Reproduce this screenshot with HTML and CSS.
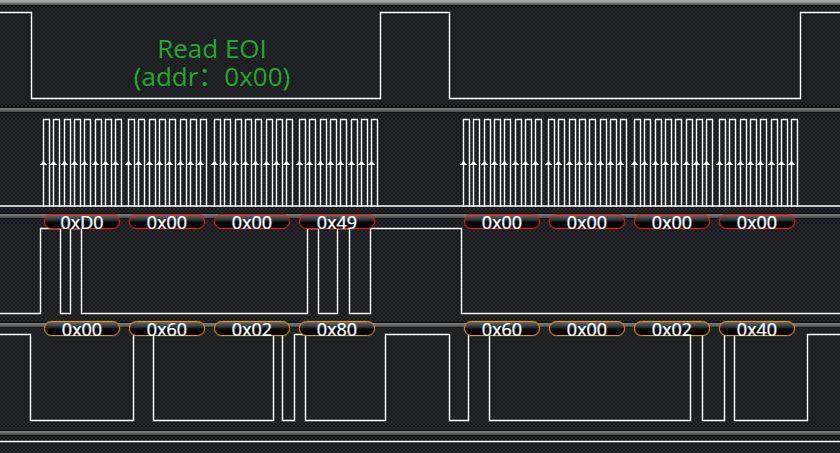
FILE: index.html
```html
<!DOCTYPE html>
<html lang="zh">
<head>
<meta charset="utf-8">
<title>Logic analyzer</title>
<link rel="stylesheet" href="styles.css">
</head>
<body>
<div class="scope">
  <div class="sep sep-top"></div>

  <div class="ch ch1">
    <svg class="wave" width="840" height="101" viewBox="0 6 840 101">
      <path d="M0 12.5H31.5V98.5H380.5V12.5H449.5V98.5H800.5V12.5H840"/>
    </svg>
    <div class="note">Read EOI<br>(addr：0x00)</div>
  </div>

  <div class="sep"></div>

  <div class="ch ch2">
    <svg class="wave" width="840" height="100" viewBox="0 113 840 100">
      <defs>
        <g id="clkbyte">
          <path class="clk" d="M0.5 206V119.5h6V206M10.5 206V119.5h6V206M21.5 206V119.5h6V206M31.5 206V119.5h6V206M41.5 206V119.5h6V206M52.5 206V119.5h6V206M62.5 206V119.5h6V206M72.5 206V119.5h6V206"/>
          <path class="arrows" d="M-3 164h7v1h-7zM-2 164l2.5-3.5 2.5 3.5zM7 164h7v1h-7zM8 164l2.5-3.5 2.5 3.5zM18 164h7v1h-7zM19 164l2.5-3.5 2.5 3.5zM28 164h7v1h-7zM29 164l2.5-3.5 2.5 3.5zM38 164h7v1h-7zM39 164l2.5-3.5 2.5 3.5zM49 164h7v1h-7zM50 164l2.5-3.5 2.5 3.5zM59 164h7v1h-7zM60 164l2.5-3.5 2.5 3.5zM69 164h7v1h-7zM70 164l2.5-3.5 2.5 3.5z"/>
        </g>
      </defs>
      <path d="M0 206H840"/>
      <use href="#clkbyte" x="43"/>
      <use href="#clkbyte" x="128"/>
      <use href="#clkbyte" x="214"/>
      <use href="#clkbyte" x="299"/>
      <use href="#clkbyte" x="463"/>
      <use href="#clkbyte" x="548"/>
      <use href="#clkbyte" x="634"/>
      <use href="#clkbyte" x="719"/>
    </svg>
  </div>

  <div class="sep bus bus-red">
    <div class="group group-a">
      <div class="badge">0xD0</div>
      <div class="badge">0x00</div>
      <div class="badge">0x00</div>
      <div class="badge">0x49</div>
    </div>
    <div class="group group-b">
      <div class="badge">0x00</div>
      <div class="badge">0x00</div>
      <div class="badge">0x00</div>
      <div class="badge">0x00</div>
    </div>
  </div>

  <div class="ch ch3">
    <svg class="wave" width="840" height="103" viewBox="0 219 840 103">
      <path d="M0 313.5H40.5V228.5H60.5V313.5H70.5V228.5H81.5V313.5H307.5V228.5H318.5V313.5H337.5V228.5H349.5V313.5H370.5V228.5H461.5V313.5H840"/>
    </svg>
  </div>

  <div class="sep bus bus-orange">
    <div class="group group-a">
      <div class="badge">0x00</div>
      <div class="badge">0x60</div>
      <div class="badge">0x02</div>
      <div class="badge">0x80</div>
    </div>
    <div class="group group-b">
      <div class="badge">0x60</div>
      <div class="badge">0x00</div>
      <div class="badge">0x02</div>
      <div class="badge">0x40</div>
    </div>
  </div>

  <div class="ch ch4">
    <svg class="wave" width="840" height="102" viewBox="0 328 840 102">
      <path d="M0 334.5H30.5V420.5H133.5V334.5H153.5V420.5H273.5V334.5H282.5V420.5H294.5V334.5H305.5V420.5H385.5V334.5H449.5V420.5H468.5V334.5H489.5V420.5H690.5V334.5H702.5V420.5H724.5V334.5H734.5V420.5H807.5V334.5H840"/>
    </svg>
  </div>

  <div class="sep"></div>

  <div class="ch ch5">
    <svg class="wave" width="840" height="17" viewBox="0 436 840 17">
      <path d="M0 441.5H840"/>
    </svg>
  </div>
</div>
</body>
</html>
```

FILE: styles.css
```css
html, body {
  margin: 0;
  padding: 0;
  background: #232529;
}

body {
  width: 840px;
  height: 453px;
  overflow: hidden;
  font-family: "Open Sans", "Noto Sans CJK SC", sans-serif;
}

.scope {
  display: flex;
  flex-direction: column;
  width: 840px;
  height: 453px;
}

.sep {
  flex: 0 0 6px;
  height: 6px;
  display: flex;
  align-items: flex-start;
  background: linear-gradient(to bottom,
    #0d0e10 0, #0d0e10 1px,
    #818181 1px, #676767 3px, #4b4b4b 5px,
    #141517 5px, #141517 6px);
}

.sep-top {
  background: linear-gradient(to bottom,
    #8e8e8e 0, #b6b6b6 1px, #7c7c7c 3px, #4e4e4e 5px,
    #121315 5px, #121315 6px);
}

.ch {
  flex: 0 0 auto;
  background-color: #282a2e;
  background-image:
    radial-gradient(circle, #16171a 0.8px, transparent 1.2px),
    radial-gradient(circle, #16171a 0.8px, transparent 1.2px);
  background-size: 4px 4px, 4px 4px;
  background-position: 0 0, 2px 2px;
}

.ch1 {
  height: 101px;
  position: relative;
}
.ch2 { height: 100px; }
.ch3 { height: 103px; }
.ch4 { height: 102px; }
.ch5 { height: 17px; }

.wave {
  display: block;
}

.wave path {
  fill: none;
  stroke: #ffffff;
  stroke-width: 1.4;
  stroke-linecap: square;
}

.wave path.arrows {
  fill: #ffffff;
  stroke: none;
}

.note {
  position: absolute;
  left: 102px;
  top: 28px;
  width: 220px;
  color: #21a92d;
  font-family: "Open Sans", "Noto Sans CJK SC", sans-serif;
  font-size: 26px;
  line-height: 28px;
  text-align: center;
  white-space: nowrap;
}

.group {
  display: flex;
  gap: 9px;
}

.group-a { margin-left: 44px; }
.group-b { margin-left: 89px; }

.badge {
  position: relative;
  z-index: 1;
  box-sizing: border-box;
  width: 76px;
  height: 15px;
  border: 1px solid;
  border-radius: 8px;
  background: linear-gradient(to bottom,
    #6a6a6a 0%, #2e2e2e 40%, #060606 55%, #000 100%);
  color: #ffffff;
  font-size: 18px;
  line-height: 14px;
  text-align: center;
  white-space: nowrap;
  text-shadow: -0.6px 0 rgba(90, 175, 255, 0.75), 0.6px 0 rgba(255, 210, 140, 0.35);
}

.bus-red .badge {
  margin-top: 1px;
  border-color: #f21a1a;
  box-shadow: 0 0 1px #f21a1a;
}

.bus-orange .badge {
  margin-top: -1px;
  border-color: #e8940f;
  box-shadow: 0 0 1px #e8940f;
}
```
